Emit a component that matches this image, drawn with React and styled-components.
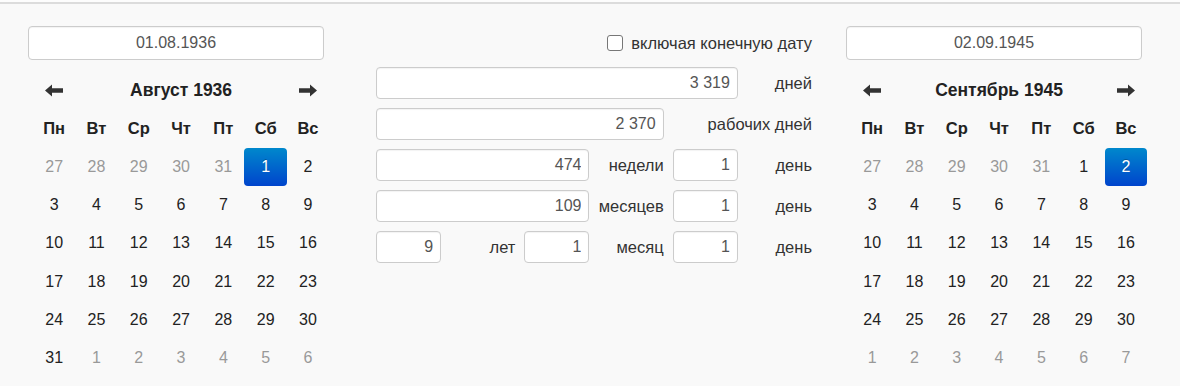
import styled, { createGlobalStyle } from "styled-components";
import React from "react";

const GlobalStyle = createGlobalStyle`
  html, body {
    margin: 0;
    padding: 0;
    background: #f9f9f9;
    font-family: "Liberation Sans", Arial, sans-serif;
    color: #333;
  }
`;

const DOW = ["Пн", "Вт", "Ср", "Чт", "Пт", "Сб", "Вс"];

const buildDays = (prevLast, prevCount, monthLen, total) => {
  const days = [];
  for (let i = prevCount - 1; i >= 0; i--) days.push({ d: prevLast - i, muted: true });
  for (let i = 1; i <= monthLen; i++) days.push({ d: i, muted: false });
  let n = 1;
  while (days.length < total) days.push({ d: n++, muted: true });
  return days;
};

const ArrowIcon = ({ dir }) => (
  <svg width="18" height="13" viewBox="0 0 18 13">
    <g transform={dir === "right" ? "matrix(-1 0 0 1 18 0)" : undefined} fill="#333">
      <path d="M0 6.5 L7 0.5 L7 4.2 L18 4.2 L18 8.8 L7 8.8 L7 12.5 Z" />
    </g>
  </svg>
);

const Calendar = ({ title, days, active }) => (
  <CalGrid>
    <NavCell>
      <ArrowIcon dir="left" />
    </NavCell>
    <Title>{title}</Title>
    <NavCell>
      <ArrowIcon dir="right" />
    </NavCell>
    {DOW.map((d) => (
      <DowCell key={d}>{d}</DowCell>
    ))}
    {days.map((day, i) => (
      <DayCell
        key={i}
        $muted={day.muted}
        $active={!day.muted && day.d === active}
      >
        {day.d}
      </DayCell>
    ))}
  </CalGrid>
);

const App = () => {
  const augDays = buildDays(31, 5, 31, 42);
  const sepDays = buildDays(31, 5, 30, 42);

  return (
    <>
      <GlobalStyle />
      <TopLine />
      <Page>
        <SideColumn>
          <DateInput readOnly value="01.08.1936" />
          <Calendar title="Август 1936" days={augDays} active={1} />
        </SideColumn>

        <Middle>
          <CheckRow>
            <CheckBox type="checkbox" />
            <span>включая конечную дату</span>
          </CheckRow>
          <ResultGrid>
            <NumField $span={5} readOnly value="3 319" />
            <Label>дней</Label>

            <NumField $span={4} readOnly value="2 370" />
            <Label $span={2}>рабочих дней</Label>

            <NumField $span={3} readOnly value="474" />
            <Label>недели</Label>
            <NumField readOnly value="1" />
            <Label>день</Label>

            <NumField $span={3} readOnly value="109" />
            <Label>месяцев</Label>
            <NumField readOnly value="1" />
            <Label>день</Label>

            <NumField readOnly value="9" />
            <Label>лет</Label>
            <NumField readOnly value="1" />
            <Label>месяц</Label>
            <NumField readOnly value="1" />
            <Label>день</Label>
          </ResultGrid>
        </Middle>

        <SideColumn>
          <DateInput readOnly value="02.09.1945" />
          <Calendar title="Сентябрь 1945" days={sepDays} active={2} />
        </SideColumn>
      </Page>
    </>
  );
};

export default App;

const TopLine = styled.div`
  height: 2px;
  background: #fdfdfd;
  border-bottom: 2px solid #dcdcdc;
`;

const Page = styled.div`
  display: flex;
  align-items: flex-start;
  padding: 22px 0 0 28px;
  height: 360px;
  overflow: hidden;
`;

const SideColumn = styled.div`
  width: 301px;
  flex-shrink: 0;
  &:last-child {
    margin-left: 34px;
  }
`;

const DateInput = styled.input`
  box-sizing: border-box;
  display: block;
  width: 296px;
  height: 34px;
  border: 1px solid #ccc;
  border-radius: 4px;
  background: #fff;
  text-align: center;
  font-family: inherit;
  font-size: 16px;
  color: #555;
  outline: none;
  padding: 0 8px;
  box-shadow: inset 0 1px 1px rgba(0, 0, 0, 0.05);
`;

const CalGrid = styled.div`
  display: grid;
  grid-template-columns: repeat(7, 42.3px);
  grid-auto-rows: 38.3px;
  margin: 11px 0 0 5px;
  font-size: 16px;
`;

const NavCell = styled.div`
  display: flex;
  align-items: center;
  justify-content: center;
  padding-top: 1px;
`;

const Title = styled.div`
  grid-column: span 5;
  display: flex;
  align-items: center;
  justify-content: center;
  font-weight: bold;
  font-size: 17.5px;
  color: #222;
`;

const DowCell = styled.div`
  display: flex;
  align-items: center;
  justify-content: center;
  font-weight: bold;
  font-size: 16.5px;
  color: #222;
`;

const DayCell = styled.div`
  display: flex;
  align-items: center;
  justify-content: center;
  color: ${({ $muted, $active }) => ($active ? "#fff" : $muted ? "#999" : "#222")};
  border-radius: 4px;
  background: ${({ $active }) =>
    $active ? "linear-gradient(to bottom, #0088cc, #0044cc)" : "transparent"};
  text-shadow: ${({ $active }) => ($active ? "0 -1px 0 rgba(0,0,0,0.25)" : "none")};
`;

const Middle = styled.div`
  width: 436px;
  flex-shrink: 0;
  margin-left: 47px;
`;

const CheckRow = styled.label`
  display: flex;
  justify-content: flex-end;
  align-items: center;
  gap: 8px;
  height: 34px;
  font-size: 16.5px;
  color: #333;
`;

const CheckBox = styled.input`
  appearance: none;
  width: 16px;
  height: 16px;
  margin: 0;
  border: 1px solid #777;
  border-radius: 3px;
  background: #fff;
`;

const ResultGrid = styled.div`
  display: grid;
  grid-template-columns: repeat(6, 1fr);
  grid-auto-rows: 32px;
  column-gap: 9px;
  row-gap: 9px;
  margin-top: 7px;
`;

const NumField = styled.input`
  box-sizing: border-box;
  grid-column: span ${({ $span }) => $span || 1};
  width: 100%;
  height: 32px;
  border: 1px solid #ccc;
  border-radius: 4px;
  background: #fff;
  text-align: right;
  font-family: inherit;
  font-size: 16px;
  color: #555;
  padding: 0 7px;
  outline: none;
  box-shadow: inset 0 1px 1px rgba(0, 0, 0, 0.05);
`;

const Label = styled.div`
  grid-column: span ${({ $span }) => $span || 1};
  display: flex;
  align-items: center;
  justify-content: flex-end;
  font-size: 16.5px;
  color: #333;
  white-space: nowrap;
`;
